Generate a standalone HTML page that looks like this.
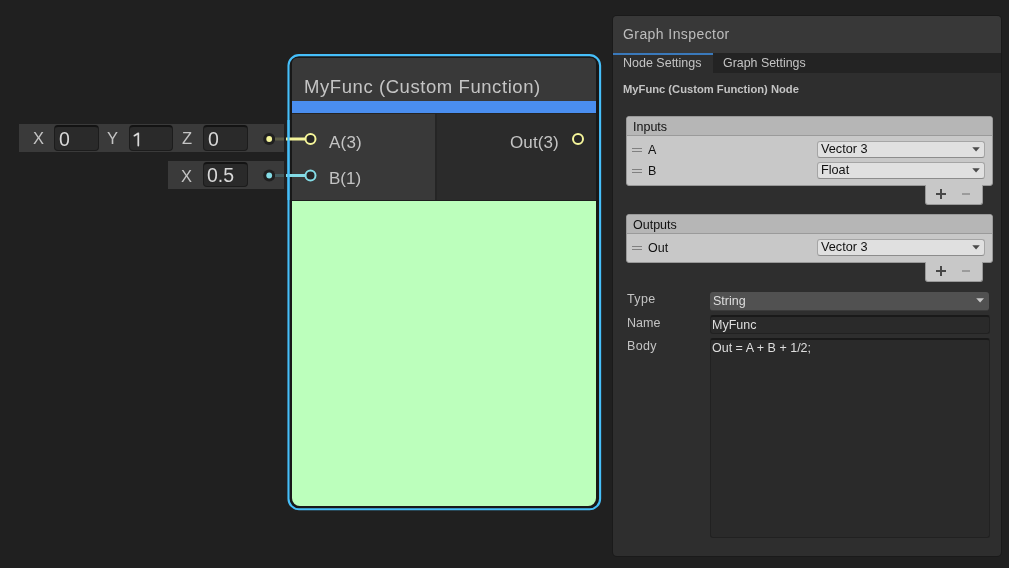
<!DOCTYPE html>
<html><head><meta charset="utf-8">
<style>
*{box-sizing:border-box;margin:0;padding:0}
html,body{width:1009px;height:568px;overflow:hidden;background:#202020;font-family:"Liberation Sans",sans-serif;}
.a{position:absolute}
.t{position:absolute;white-space:pre;line-height:1;will-change:transform}
</style></head><body>
<div class="a" style="left:19px;top:124px;width:265px;height:28px;background:#3a3a3a"></div>
<div class="a" style="left:54px;top:125px;width:44.5px;height:26px;background:#2a2a2a;border:1px solid #1c1c1c;border-top:2px solid #131313;border-radius:4px"></div>
<div class="a" style="left:128.5px;top:125px;width:44.5px;height:26px;background:#2a2a2a;border:1px solid #1c1c1c;border-top:2px solid #131313;border-radius:4px"></div>
<div class="a" style="left:203px;top:125px;width:44.5px;height:26px;background:#2a2a2a;border:1px solid #1c1c1c;border-top:2px solid #131313;border-radius:4px"></div>
<div class="t" style="left:32.8px;top:130.00px;font-size:16.5px;color:#c4c4c4;">X</div>
<div class="t" style="left:58.5px;top:130.00px;font-size:19.5px;color:#d8d8d8;">0</div>
<div class="t" style="left:106.5px;top:130.00px;font-size:16.5px;color:#c4c4c4;">Y</div>
<svg class="a" style="left:0;top:0" width="1009" height="568"><path d="M134.4 135.7 L138.3 133.3 V145.6" fill="none" stroke="#d8d8d8" stroke-width="1.75" stroke-linecap="round" stroke-linejoin="round"/></svg>
<div class="t" style="left:181.5px;top:130.00px;font-size:16.5px;color:#c4c4c4;">Z</div>
<div class="t" style="left:207.5px;top:130.00px;font-size:19.5px;color:#d8d8d8;">0</div>
<div class="a" style="left:168px;top:161px;width:116px;height:27.5px;background:#3a3a3a"></div>
<div class="a" style="left:203px;top:162px;width:44.5px;height:25px;background:#2a2a2a;border:1px solid #1c1c1c;border-top:2px solid #131313;border-radius:4px"></div>
<div class="t" style="left:181.3px;top:168.00px;font-size:16.5px;color:#c4c4c4;">X</div>
<div class="t" style="left:207px;top:166.00px;font-size:19.5px;color:#d8d8d8;">0.5</div>
<svg class="a" style="left:0;top:0" width="1009" height="568">
  <circle cx="269.2" cy="139" r="6" fill="#1f1f1f"/>
  <circle cx="269.2" cy="139" r="2.9" fill="#f5f59a"/>
  <rect x="275" y="137.5" width="9" height="3" fill="#5c5d49"/>
  <circle cx="269.2" cy="175.5" r="6" fill="#1f1f1f"/>
  <circle cx="269.2" cy="175.5" r="2.9" fill="#84dce6"/>
  <rect x="275" y="174" width="9" height="3" fill="#445c5f"/>
</svg>
<svg class="a" style="left:0;top:0" width="1009" height="568"><rect x="288.5" y="55.1" width="311.6" height="454.1" rx="10.5" fill="#181818" stroke="#46bffa" stroke-width="2.1"/></svg>
<div class="a" style="left:291.5px;top:58px;width:304.5px;height:447.5px;border-radius:5px 5px 8px 8px;overflow:hidden;background:#393939">
  <div class="a" style="left:0;top:43px;width:100%;height:12px;background:#4a8ef0"></div>
  <div class="a" style="left:0;top:55px;width:100%;height:1px;background:#242424"></div>
  <div class="a" style="left:0;top:56px;width:143.5px;height:86px;background:#393939"></div>
  <div class="a" style="left:143.5px;top:56px;width:2px;height:86px;background:#252525"></div>
  <div class="a" style="left:145.5px;top:56px;width:161px;height:86px;background:#2b2b2b"></div>
  <div class="a" style="left:0;top:142px;width:100%;height:1px;background:#1e1e1e"></div>
  <div class="a" style="left:0;top:143px;width:100%;height:310px;background:#bcffbc"></div>
</div>
<div class="t" style="left:304.3px;top:78.00px;font-size:18.5px;color:#c4c4c4;letter-spacing:0.57px">MyFunc (Custom Function)</div>
<div class="t" style="left:329px;top:134.00px;font-size:17px;color:#c4c4c4;letter-spacing:0.2px">A(3)</div>
<div class="t" style="left:329px;top:170.00px;font-size:17px;color:#c4c4c4;">B(1)</div>
<div class="t" style="left:509.8px;top:134.00px;font-size:17px;color:#c4c4c4;letter-spacing:0.12px">Out(3)</div>
<svg class="a" style="left:0;top:0" width="1009" height="568">
  <rect x="286" y="137.5" width="19" height="3" fill="#f5f59a"/>
  <rect x="286" y="174" width="19" height="3" fill="#84dce6"/>
  <rect x="287.45" y="120" width="2.1" height="80" fill="#46bffa"/>
  <circle cx="310.5" cy="139" r="5" fill="#262626" stroke="#f5f59a" stroke-width="2"/>
  <circle cx="310.5" cy="175.5" r="5" fill="#262626" stroke="#84dce6" stroke-width="2"/>
  <circle cx="578" cy="139" r="5" fill="#262626" stroke="#f5f59a" stroke-width="2"/>
</svg>
<div class="a" style="left:613px;top:16px;width:388px;height:540px;background:#2e2e2e;border-radius:4px;overflow:hidden;box-shadow:0 0 0 1px #1a1a1a">
  <div class="a" style="left:0;top:0;width:100%;height:37px;background:#383838"></div>
  <div class="a" style="left:0;top:37px;width:100%;height:20px;background:#232323"></div>
  <div class="a" style="left:0;top:37px;width:100px;height:20px;background:#2e2e2e"></div>
  <div class="a" style="left:0;top:37px;width:100px;height:2px;background:#3a79bb"></div>
</div>
<div class="t" style="left:622.5px;top:27.00px;font-size:14px;color:#bdbdbd;letter-spacing:0.42px">Graph Inspector</div>
<div class="t" style="left:622.6px;top:57.00px;font-size:12.5px;color:#c4c4c4;">Node Settings</div>
<div class="t" style="left:723.3px;top:57.00px;font-size:12.4px;color:#c4c4c4;">Graph Settings</div>
<div class="t" style="left:622.6px;top:84.00px;font-size:11.2px;color:#c4c4c4;font-weight:bold">MyFunc (Custom Function) Node</div>
<div class="a" style="left:626px;top:116px;width:367px;height:70px;background:#c8c8c8;border:1px solid #999;border-radius:3px;overflow:hidden"><div class="a" style="left:0;top:0;width:100%;height:19px;background:#b6b6b6;border-bottom:1px solid #9a9a9a"></div></div>
<div class="t" style="left:633.3px;top:121.00px;font-size:12.5px;color:#101010;">Inputs</div>
<div class="a" style="left:632px;top:148px;width:10px;height:1px;background:#808080"></div>
<div class="a" style="left:632px;top:151px;width:10px;height:1px;background:#808080"></div>
<div class="t" style="left:648.3px;top:144.00px;font-size:12.5px;color:#101010;">A</div>
<div class="a" style="left:632px;top:169px;width:10px;height:1px;background:#808080"></div>
<div class="a" style="left:632px;top:172px;width:10px;height:1px;background:#808080"></div>
<div class="t" style="left:648.3px;top:165.00px;font-size:12.5px;color:#101010;">B</div>
<div class="a" style="left:816.5px;top:140.5px;width:168px;height:17px;background:#e0e0e0;border:1px solid #a5a5a5;border-bottom-color:#8c8c8c;border-radius:3px"></div>
<div class="t" style="left:820.5px;top:143.00px;font-size:12.7px;color:#101010;">Vector 3</div>
<div class="a" style="left:816.5px;top:161.5px;width:168px;height:17px;background:#e0e0e0;border:1px solid #a5a5a5;border-bottom-color:#8c8c8c;border-radius:3px"></div>
<div class="t" style="left:820.5px;top:164.00px;font-size:12.7px;color:#101010;">Float</div>
<div class="a" style="left:925px;top:185px;width:58px;height:19.5px;background:#c8c8c8;border:1px solid #999;border-top:none;border-radius:0 0 3px 3px"></div>
<div class="a" style="left:926px;top:184px;width:56px;height:2px;background:#c8c8c8"></div>
<div class="a" style="left:626px;top:214px;width:367px;height:49px;background:#c8c8c8;border:1px solid #999;border-radius:3px;overflow:hidden"><div class="a" style="left:0;top:0;width:100%;height:19px;background:#b6b6b6;border-bottom:1px solid #9a9a9a"></div></div>
<div class="t" style="left:633.3px;top:219.00px;font-size:12.5px;color:#101010;">Outputs</div>
<div class="a" style="left:632px;top:246px;width:10px;height:1px;background:#808080"></div>
<div class="a" style="left:632px;top:249px;width:10px;height:1px;background:#808080"></div>
<div class="t" style="left:648.3px;top:242.00px;font-size:12.5px;color:#101010;">Out</div>
<div class="a" style="left:816.5px;top:238.5px;width:168px;height:17px;background:#e0e0e0;border:1px solid #a5a5a5;border-bottom-color:#8c8c8c;border-radius:3px"></div>
<div class="t" style="left:820.5px;top:241.00px;font-size:12.7px;color:#101010;">Vector 3</div>
<div class="a" style="left:925px;top:262px;width:58px;height:19.5px;background:#c8c8c8;border:1px solid #999;border-top:none;border-radius:0 0 3px 3px"></div>
<div class="a" style="left:926px;top:261px;width:56px;height:2px;background:#c8c8c8"></div>
<div class="t" style="left:626.8px;top:293.00px;font-size:12.5px;color:#c4c4c4;letter-spacing:0.4px">Type</div>
<div class="t" style="left:626.8px;top:317.00px;font-size:12.5px;color:#c4c4c4;">Name</div>
<div class="t" style="left:626.8px;top:340.00px;font-size:12.5px;color:#c4c4c4;letter-spacing:0.3px">Body</div>
<div class="a" style="left:709.8px;top:292px;width:279.5px;height:18.5px;background:#515151;border-radius:3px;border-bottom:1px solid #3a3a3a"></div>
<div class="t" style="left:713.4px;top:295.00px;font-size:12.5px;color:#dedede;">String</div>
<div class="a" style="left:709.8px;top:315px;width:280px;height:18.8px;background:#2a2a2a;border:1px solid #212121;border-top:2px solid #191919;border-radius:3px"></div>
<div class="t" style="left:711.9px;top:319.00px;font-size:12.5px;color:#dedede;">MyFunc</div>
<div class="a" style="left:709.8px;top:338px;width:280px;height:199.5px;background:#2a2a2a;border:1px solid #212121;border-top:2px solid #191919;border-radius:3px"></div>
<div class="t" style="left:711.9px;top:342.00px;font-size:12.5px;color:#dedede;">Out = A + B + 1/2;</div>
<svg class="a" style="left:0;top:0" width="1009" height="568">
  <path d="M972.3 147.3 L979.8 147.3 L976.05 151.6 Z" fill="#4a4a4a"/>
  <path d="M972.3 168.3 L979.8 168.3 L976.05 172.6 Z" fill="#4a4a4a"/>
  <path d="M972.3 245.3 L979.8 245.3 L976.05 249.6 Z" fill="#4a4a4a"/>
  <path d="M976.2 298.2 L984 298.2 L980.1 302.4 Z" fill="#c8c8c8"/>
  <path d="M936 194 H946 M941 189 V199" stroke="#474747" stroke-width="2"/>
  <path d="M962 194 H970" stroke="#8c8c8c" stroke-width="1.5"/>
  <path d="M936 271 H946 M941 266 V276" stroke="#474747" stroke-width="2"/>
  <path d="M962 271 H970" stroke="#8c8c8c" stroke-width="1.5"/>
</svg>
</body></html>
